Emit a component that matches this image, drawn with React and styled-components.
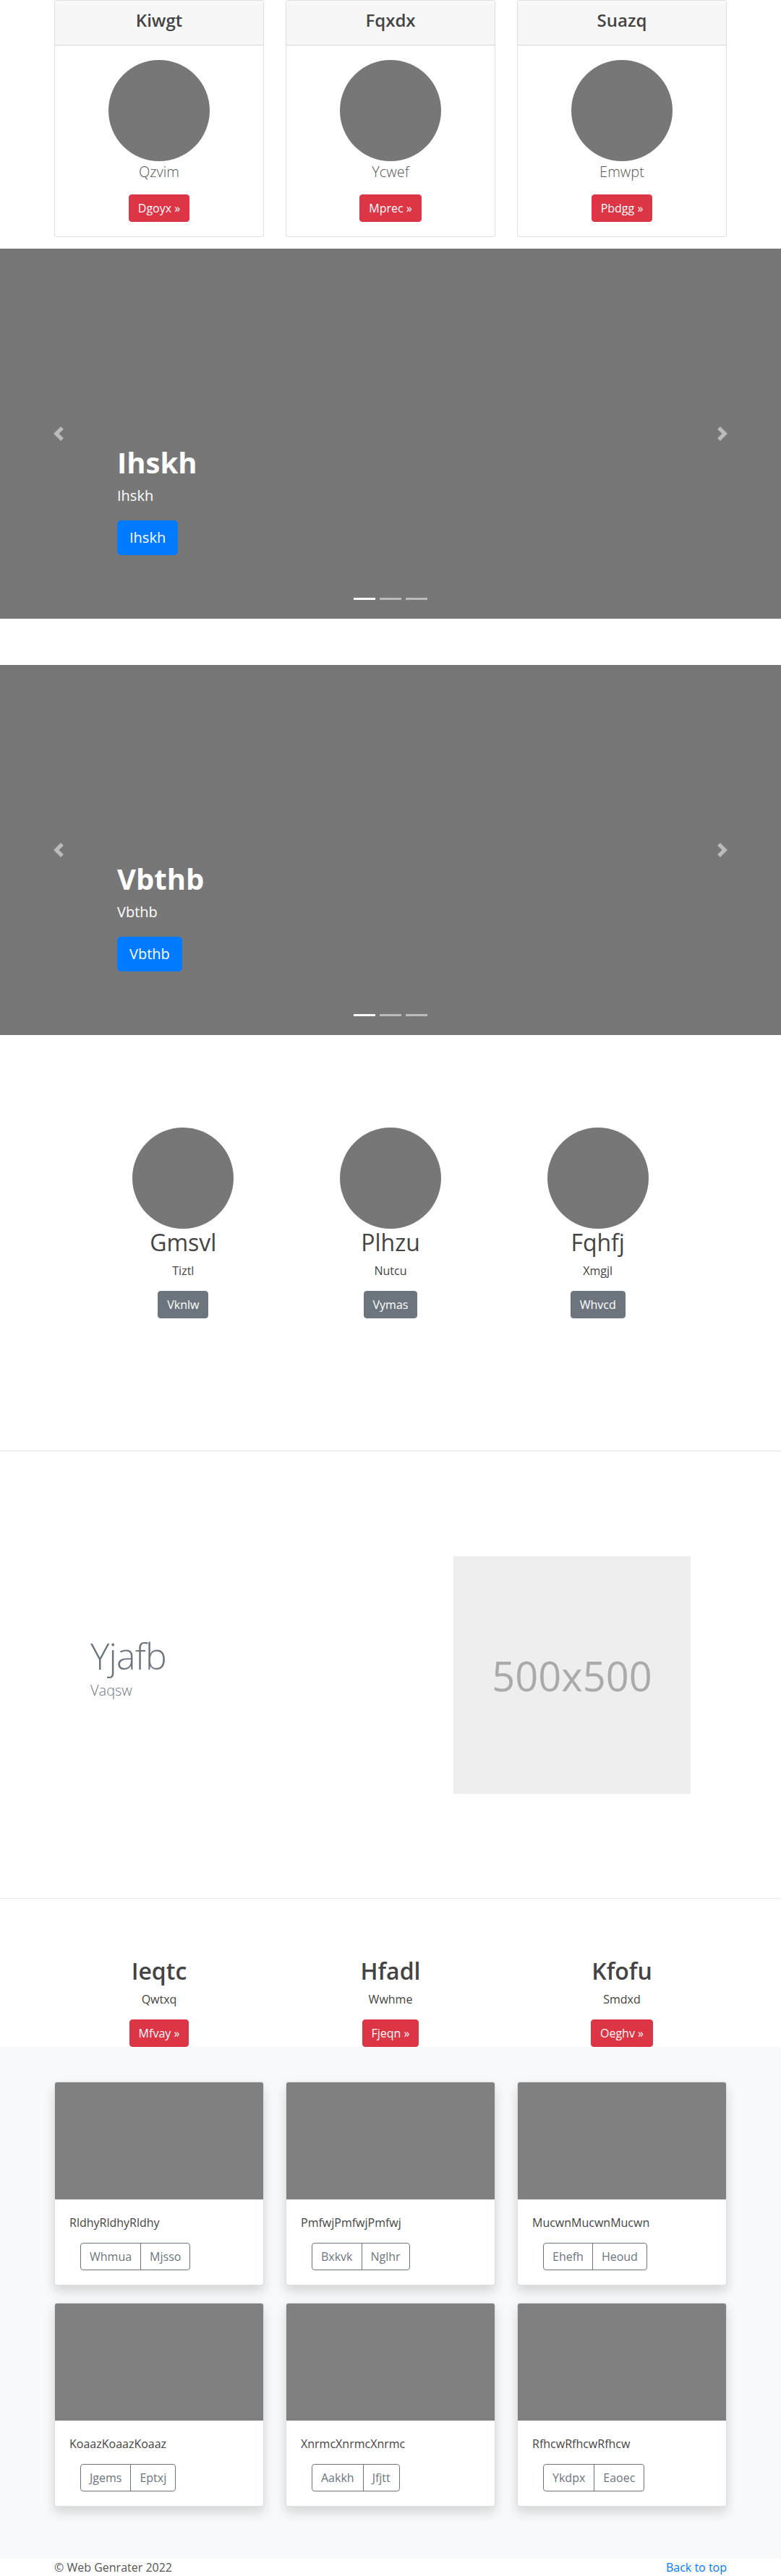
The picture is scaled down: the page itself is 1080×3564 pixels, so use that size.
import React from "react";
import styled, { createGlobalStyle, css } from "styled-components";

const GlobalStyle = createGlobalStyle`
  *, *::before, *::after { box-sizing: border-box; }
  html, body { margin: 0; padding: 0; }
  body {
    font-family: "Open Sans", "Noto Sans", "Liberation Sans", sans-serif;
    font-size: 16px;
    line-height: 1.5;
    color: #212529;
    background: #fff;
  }
  h1, h2, h3, h4, p, ol { margin: 0; padding: 0; }
`;

const variants = {
  danger: css`background: #dc3545; border-color: #dc3545; color: #fff;`,
  primary: css`background: #007bff; border-color: #007bff; color: #fff;`,
  secondary: css`background: #6c757d; border-color: #6c757d; color: #fff;`,
};

const Button = styled.a`
  display: inline-block;
  border: 1px solid transparent;
  text-decoration: none;
  font-weight: 400;
  white-space: nowrap;
  padding: ${(p) => (p.$lg ? "8px 16px" : "6px 12px")};
  font-size: ${(p) => (p.$lg ? 20 : 16)}px;
  line-height: ${(p) => (p.$lg ? 30 : 24)}px;
  border-radius: ${(p) => (p.$lg ? 5 : 4)}px;
  vertical-align: top;
  ${(p) => variants[p.$variant || "danger"]}
`;

const Container = styled.div`
  width: ${(p) => p.$w || 930}px;
  margin: 0 auto;
`;

const Grid3 = styled.div`
  display: grid;
  grid-template-columns: repeat(3, 1fr);
  column-gap: 30px;
  row-gap: ${(p) => p.$rowGap || 0}px;
`;

/* ---------- top pricing cards ---------- */
const TopSection = styled.section`
  padding-bottom: 16px;
`;

const PriceCard = styled.div`
  border: 1px solid rgba(0, 0, 0, 0.125);
  border-radius: 4px;
  overflow: hidden;
  background: #fff;
`;

const CardHeader = styled.div`
  background: #f7f7f7;
  border-bottom: 1px solid rgba(0, 0, 0, 0.125);
  padding: 12px 20px;
  text-align: center;
`;

const CardTitle = styled.h4`
  font-size: 24px;
  line-height: 29px;
  font-weight: 600;
  margin-bottom: 8px;
  color: #444;
`;

const CardBody = styled.div`
  padding: 20px;
  text-align: center;
`;

const Avatar = styled.div`
  width: 140px;
  height: 140px;
  border-radius: 50%;
  background: #777;
  margin: 0 auto;
`;

const Lead = styled.p`
  font-size: 20px;
  line-height: 30px;
  font-weight: 300;
  margin-bottom: 16px;
  color: ${(p) => (p.$muted ? "#6c757d" : "#555")};
`;

/* ---------- carousel ---------- */
const Slides = styled.div`
  display: flex;
  flex-direction: column;
  gap: 64px;
`;

const Slide = styled.div`
  position: relative;
  height: 512px;
  background: #777;
  overflow: hidden;
`;

const Control = styled.a`
  position: absolute;
  top: 0;
  bottom: 0;
  ${(p) => p.$side}: 0;
  width: 15%;
  display: flex;
  align-items: center;
  justify-content: center;
  opacity: 0.5;
`;

const Caption = styled.div`
  position: absolute;
  left: 15%;
  right: 15%;
  bottom: 48px;
  padding: 20px 0;
  color: #fff;
  text-align: left;
`;

const CaptionTitle = styled.h1`
  font-size: 40px;
  line-height: 48px;
  font-weight: 700;
  margin-bottom: 8px;
`;

const CaptionText = styled.p`
  font-size: 20px;
  line-height: 28px;
  margin-bottom: 20px;
`;

const Indicators = styled.ol`
  position: absolute;
  left: 0;
  right: 0;
  bottom: 26px;
  display: flex;
  justify-content: center;
  gap: 6px;
  list-style: none;
`;

const Indicator = styled.li`
  width: 30px;
  height: 3px;
  background: #fff;
  opacity: ${(p) => (p.$active ? 1 : 0.5)};
`;

const Chevron = ({ dir }) => (
  <svg width="20" height="20" viewBox="0 0 8 8" fill="#fff">
    {dir === "prev" ? (
      <path d="M5.25 0l-4 4 4 4 1.5-1.5L4.25 4l2.5-2.5L5.25 0z" />
    ) : (
      <path d="M2.75 0l-1.5 1.5L3.75 4l-2.5 2.5L2.75 8l4-4-4-4z" />
    )}
  </svg>
);

/* ---------- team ---------- */
const TeamSection = styled.section`
  padding: 128px 0 183px;
`;

const Member = styled.div`
  text-align: center;
`;

const MemberName = styled.h2`
  font-size: 32px;
  line-height: 38px;
  font-weight: 400;
  margin-bottom: 8px;
  color: #444;
`;

const SmallText = styled.p`
  font-size: 16px;
  line-height: 24px;
  margin-bottom: 16px;
  color: #444;
`;

/* ---------- featurette ---------- */
const FeatSection = styled.section`
  border-top: 1px solid rgba(0, 0, 0, 0.1);
  border-bottom: 1px solid rgba(0, 0, 0, 0.1);
  padding: 145px 0 144px;
`;

const FeatRow = styled.div`
  display: grid;
  grid-template-columns: 1fr 328px;
  column-gap: 30px;
  align-items: center;
`;

const FeatHeading = styled.h2`
  font-size: 50px;
  line-height: 50px;
  font-weight: 300;
  letter-spacing: -0.8px;
  color: #6c757d;
  margin-bottom: 8px;
`;

const Placeholder = styled.div`
  height: 329px;
  background: #eee;
  color: #aaa;
  font-size: 56px;
  display: flex;
  align-items: center;
  justify-content: center;
`;

/* ---------- plans ---------- */
const PlanSection = styled.section`
  padding-top: 81px;
`;

const PlanTitle = styled.h2`
  font-size: 32px;
  line-height: 38px;
  font-weight: 600;
  margin-bottom: 8px;
  color: #444;
`;

/* ---------- album ---------- */
const AlbumSection = styled.section`
  background: #f8f9fa;
  padding: 48px 0 72px;
`;

const AlbumCard = styled.div`
  background: #fff;
  border: 1px solid rgba(0, 0, 0, 0.125);
  border-radius: 4px;
  overflow: hidden;
  box-shadow: 0 8px 16px rgba(0, 0, 0, 0.15);
`;

const Thumb = styled.div`
  height: 162px;
  background: #808080;
`;

const AlbumBody = styled.div`
  padding: 20px;
`;

const AlbumText = styled.p`
  font-size: 16px;
  line-height: 24px;
  margin-bottom: 16px;
  color: #444;
`;

const BtnGroup = styled.div`
  display: inline-flex;
  margin-left: 15px;
`;

const OutlineBtn = styled.a`
  display: inline-block;
  padding: 6px 12px;
  font-size: 16px;
  line-height: 24px;
  color: #6c757d;
  border: 1px solid #6c757d;
  background: transparent;
  text-decoration: none;
  &:first-child { border-radius: 4px 0 0 4px; }
  &:last-child { border-radius: 0 4px 4px 0; margin-left: -1px; }
`;

/* ---------- footer ---------- */
const Footer = styled.footer`
  background: #fff;
`;

const FooterRow = styled.div`
  display: flex;
  justify-content: space-between;
  font-size: 16px;
  line-height: 24px;
  color: #555;
`;

const TopLink = styled.a`
  color: #007bff;
  text-decoration: none;
`;

const topCards = [
  { title: "Kiwgt", lead: "Qzvim", btn: "Dgoyx »" },
  { title: "Fqxdx", lead: "Ycwef", btn: "Mprec »" },
  { title: "Suazq", lead: "Emwpt", btn: "Pbdgg »" },
];

const slides = ["Ihskh", "Vbthb"];

const team = [
  { name: "Gmsvl", role: "Tiztl", btn: "Vknlw" },
  { name: "Plhzu", role: "Nutcu", btn: "Vymas" },
  { name: "Fqhfj", role: "Xmgjl", btn: "Whvcd" },
];

const plans = [
  { title: "Ieqtc", text: "Qwtxq", btn: "Mfvay »" },
  { title: "Hfadl", text: "Wwhme", btn: "Fjeqn »" },
  { title: "Kfofu", text: "Smdxd", btn: "Oeghv »" },
];

const album = [
  { text: "RldhyRldhyRldhy", btns: ["Whmua", "Mjsso"] },
  { text: "PmfwjPmfwjPmfwj", btns: ["Bxkvk", "Nglhr"] },
  { text: "MucwnMucwnMucwn", btns: ["Ehefh", "Heoud"] },
  { text: "KoaazKoaazKoaaz", btns: ["Jgems", "Eptxj"] },
  { text: "XnrmcXnrmcXnrmc", btns: ["Aakkh", "Jfjtt"] },
  { text: "RfhcwRfhcwRfhcw", btns: ["Ykdpx", "Eaoec"] },
];

export default function App() {
  return (
    <>
      <GlobalStyle />
      <TopSection>
        <Container>
          <Grid3>
            {topCards.map((c) => (
              <PriceCard key={c.title}>
                <CardHeader>
                  <CardTitle>{c.title}</CardTitle>
                </CardHeader>
                <CardBody>
                  <Avatar />
                  <Lead>{c.lead}</Lead>
                  <Button $variant="danger">{c.btn}</Button>
                </CardBody>
              </PriceCard>
            ))}
          </Grid3>
        </Container>
      </TopSection>

      <Slides>
        {slides.map((s) => (
          <Slide key={s}>
            <Control $side="left">
              <Chevron dir="prev" />
            </Control>
            <Control $side="right">
              <Chevron dir="next" />
            </Control>
            <Caption>
              <CaptionTitle>{s}</CaptionTitle>
              <CaptionText>{s}</CaptionText>
              <CaptionText>
                <Button $variant="primary" $lg>
                  {s}
                </Button>
              </CaptionText>
            </Caption>
            <Indicators>
              <Indicator $active />
              <Indicator />
              <Indicator />
            </Indicators>
          </Slide>
        ))}
      </Slides>

      <TeamSection>
        <Container $w={830}>
          <Grid3>
            {team.map((m) => (
              <Member key={m.name}>
                <Avatar />
                <MemberName>{m.name}</MemberName>
                <SmallText>{m.role}</SmallText>
                <Button $variant="secondary">{m.btn}</Button>
              </Member>
            ))}
          </Grid3>
        </Container>
      </TeamSection>

      <FeatSection>
        <Container $w={830}>
          <FeatRow>
            <div>
              <FeatHeading>Yjafb</FeatHeading>
              <Lead $muted>Vaqsw</Lead>
            </div>
            <Placeholder>500x500</Placeholder>
          </FeatRow>
        </Container>
      </FeatSection>

      <PlanSection>
        <Container>
          <Grid3>
            {plans.map((p) => (
              <Member key={p.title}>
                <PlanTitle>{p.title}</PlanTitle>
                <SmallText>{p.text}</SmallText>
                <Button $variant="danger">{p.btn}</Button>
              </Member>
            ))}
          </Grid3>
        </Container>
      </PlanSection>

      <AlbumSection>
        <Container>
          <Grid3 $rowGap={24}>
            {album.map((a) => (
              <AlbumCard key={a.text}>
                <Thumb />
                <AlbumBody>
                  <AlbumText>{a.text}</AlbumText>
                  <BtnGroup>
                    {a.btns.map((b) => (
                      <OutlineBtn key={b}>{b}</OutlineBtn>
                    ))}
                  </BtnGroup>
                </AlbumBody>
              </AlbumCard>
            ))}
          </Grid3>
        </Container>
      </AlbumSection>

      <Footer>
        <Container>
          <FooterRow>
            <span>© Web Genrater 2022</span>
            <TopLink>Back to top</TopLink>
          </FooterRow>
        </Container>
      </Footer>
    </>
  );
}
